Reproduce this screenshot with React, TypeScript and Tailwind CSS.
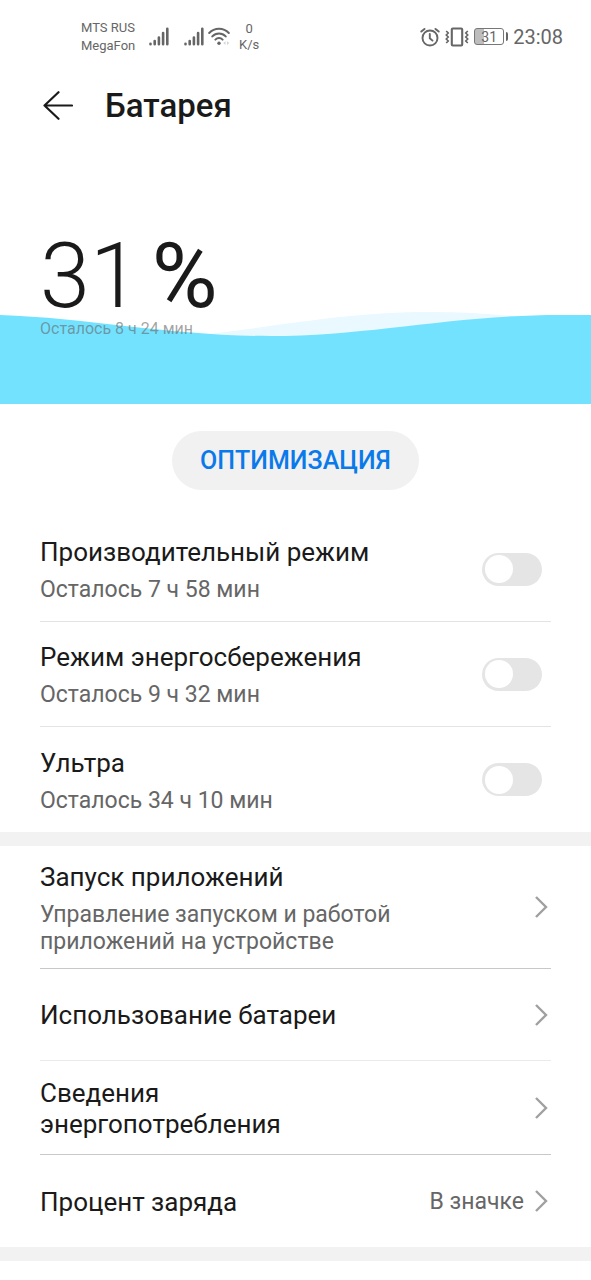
import { useState, type ReactNode } from "react";

function Signal() {
  return (
    <svg viewBox="0 0 20 19" className="h-[19px] w-5" fill="none" stroke="#666" strokeWidth="2.6" strokeLinecap="round" aria-hidden="true">
      <path d="M1.5 16.8v.4M5.7 14v3.2M9.9 10.500v6.700M14.100 6v11.200M18.300 1.800v15.400" />
    </svg>
  );
}

function Wifi() {
  return (
    <svg viewBox="0 0 22 19" className="h-[19px] w-[22px]" fill="none" stroke="#666" strokeWidth="2" strokeLinecap="round" aria-hidden="true">
      <path d="M1.200 6C6.500.4 15.500.4 20.800 6M4.300 9.400c3.700-3.900 9.700-3.900 13.400 0M7.400 12.600c2-2.100 5.200-2.100 7.200 0" />
      <circle cx="11" cy="16.300" r="1.700" fill="#666" stroke="none" />
      <path d="M17.500 14.300v3.600l-2.300-1.800zM19 14.300v3.600l2.300-1.800z" fill="#d5d5d5" stroke="none" />
    </svg>
  );
}

function Alarm() {
  return (
    <svg viewBox="0 0 20 20" className="size-5" fill="none" stroke="#666" strokeWidth="1.900" strokeLinecap="round" aria-hidden="true">
      <circle cx="10" cy="11" r="7.500" />
      <path d="M9.800 7v4.200l2.700 2.400M1.300 4.600l3.200-2.700M18.700 4.600l-3.200-2.700" />
    </svg>
  );
}

function Vibrate() {
  return (
    <svg viewBox="0 0 24 20" className="h-5 w-6" fill="none" stroke="#666" strokeWidth="2.100" strokeLinejoin="round" aria-hidden="true">
      <rect x="6.800" y="1.500" width="10.400" height="17" rx="1" />
      <path d="M1.200 4l2.100 2-2.100 2 2.100 2-2.100 2 2.100 2-2.100 2M22.800 4l-2.100 2 2.100 2-2.100 2 2.100 2-2.100 2 2.100 2" strokeWidth="1.700" />
    </svg>
  );
}

function BatteryLevel() {
  return (
    <div className="flex items-center gap-0.5">
      <div className="flex h-[17px] w-[30px] items-center justify-center rounded-[3px] border border-[#777] bg-linear-to-r from-[#bdbdbd] from-32% to-white to-32% text-[14px] leading-none">
        31
      </div>
      <div className="h-[9px] w-0.5 rounded-r bg-[#666]" />
    </div>
  );
}

function Chevron() {
  return (
    <svg viewBox="0 0 14 22" className="h-[22px] w-3.5 shrink-0" fill="none" stroke="#a0a0a0" strokeWidth="2.400" aria-hidden="true">
      <path d="M2 1l10 10L2 21" />
    </svg>
  );
}

function ModeRow({ title, left }: { title: string; left: string }) {
  const [on, setOn] = useState(false);
  return (
    <label className="flex min-h-[105px] items-center justify-between border-b border-[#e3e3e3] pr-[9px] last:border-b-0">
      <span className="flex flex-col gap-2 pt-0.5">
        <span className="text-[26px] leading-[31px]">{title}</span>
        <span className="text-[23px] leading-[27px] text-[#666]">{left}</span>
      </span>
      <input
        type="checkbox"
        role="switch"
        checked={on}
        onChange={() => setOn(!on)}
        className="flex h-[33px] w-[60px] shrink-0 appearance-none items-center rounded-full bg-[#e5e5e5] px-[3px] before:size-7 before:rounded-full before:bg-white checked:justify-end checked:bg-[#007dff]"
      />
    </label>
  );
}

function LinkRow({ title, note, value, className }: { title: ReactNode; note?: string; value?: string; className: string }) {
  return (
    <a href="#" className={`flex items-center justify-between ${className}`}>
      <span className="flex flex-col gap-2 pt-0.5">
        <span className="max-w-[360px] text-[26px] leading-[31px]">{title}</span>
        {note && <span className="max-w-[360px] text-[23px] leading-[27px] text-[#666]">{note}</span>}
      </span>
      <span className="mr-[3px] flex items-center gap-2.5 text-[23px] leading-[27px] text-[#666]">
        {value}
        <Chevron />
      </span>
    </a>
  );
}

export default function App() {
  return (
    <div className="min-h-screen bg-white font-['Roboto','Noto_Sans',sans-serif] text-[#1a1a1a]">
      <div className="flex h-[72px] items-center justify-between pt-px pr-7 pl-[81px] text-[13px] text-[#666]">
        <div className="flex items-center">
          <div className="w-[68px] leading-[18px]">
            <div>MTS RUS</div>
            <div>MegaFon</div>
          </div>
          <Signal />
          <div className="ml-[15px] flex items-center gap-1">
            <Signal />
            <Wifi />
          </div>
          <div className="ml-[9px] text-center leading-4">
            <div>0</div>
            <div>K/s</div>
          </div>
        </div>
        <div className="flex items-center gap-[5px]">
          <Alarm />
          <Vibrate />
          <BatteryLevel />
          <span className="text-[20px] leading-6">23:08</span>
        </div>
      </div>

      <header className="flex h-[68px] items-center gap-8 pl-[43px]">
        <button type="button" aria-label="Назад">
          <svg viewBox="0 0 30 30" className="size-[30px]" fill="none" stroke="#1a1a1a" strokeWidth="2.200" strokeLinecap="round" strokeLinejoin="round" aria-hidden="true">
            <path d="M29 14.500H1.500M15.500 1.200L1.500 14.500l14 13.300" />
          </svg>
        </button>
        <h1 className="text-[33px] leading-10 font-medium">Батарея</h1>
      </header>

      <section className="relative flex h-[264px] flex-col justify-end">
        <svg viewBox="0 0 590 94" preserveAspectRatio="none" className="absolute inset-x-0 bottom-0 h-[94px] w-full" aria-hidden="true">
          <path d="M200 25C300 13 350 2 430 2c60 0 120 8 160 14v20H200z" fill="#e9f9ff" />
          <path d="M0 5C90 8 170 26 270 26 370 26 450 5 560 5h30v89H0z" fill="#73e2ff" />
        </svg>
        <div className="relative px-10 pb-[63px]">
          <p className="flex items-baseline gap-3 text-[90px] leading-[80px]">
            <span className="font-light">31</span>
            <span>%</span>
          </p>
          <p className="text-[16px] leading-6 text-[#666]/60">Осталось 8 ч 24 мин</p>
        </div>
      </section>

      <div className="flex justify-center py-[27px]">
        <button type="button" className="h-[59px] rounded-full bg-[#f1f1f1] px-7 text-[25px] leading-7 font-medium text-[#0a7aea]">
          ОПТИМИЗАЦИЯ
        </button>
      </div>

      <section className="px-10">
        <ModeRow title="Производительный режим" left="Осталось 7 ч 58 мин" />
        <ModeRow title="Режим энергосбережения" left="Осталось 9 ч 32 мин" />
        <ModeRow title="Ультра" left="Осталось 34 ч 10 мин" />
      </section>

      <div className="h-3.5 bg-[#f2f2f2]" />

      <nav className="px-10">
        <LinkRow className="min-h-[123px] border-b border-[#c8c8c8]" title="Запуск приложений" note="Управление запуском и работой приложений на устройстве" />
        <LinkRow className="min-h-[92px] border-b border-[#eaeaea]" title="Использование батареи" />
        <LinkRow className="min-h-[94px] border-b border-[#c8c8c8]" title={<>Сведения<br />энергопотребления</>} />
        <LinkRow className="min-h-[92px]" title="Процент заряда" value="В значке" />
      </nav>

      <div className="h-3.5 bg-[#f2f2f2]" />
    </div>
  );
}
